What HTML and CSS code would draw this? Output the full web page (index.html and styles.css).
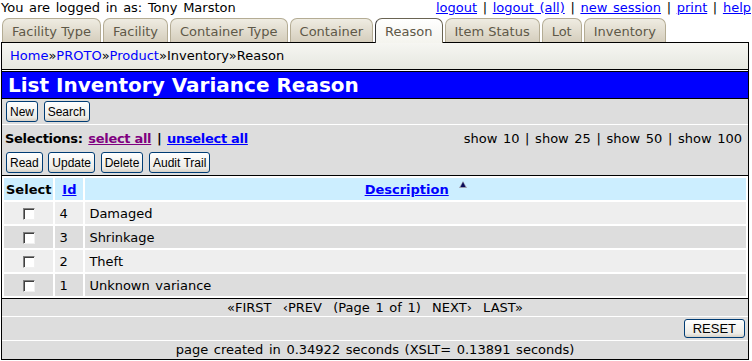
FILE: index.html
```html
<!DOCTYPE html>
<html lang="en">

<head>
    <meta charset="UTF-8">
    <title>List Inventory Variance Reason</title>
    <link rel="stylesheet" href="styles.css">
</head>

<body>
    <div class="topbar">
        <span>You are logged in as: Tony Marston</span>
        <span class="toplinks">
            <a href="#">logout</a> | <a href="#">logout (all)</a> | <a href="#">new session</a> | <a href="#">print</a> | <a href="#">help</a>
        </span>
    </div>

    <div class="tabs">
        <span class="tab">Facility Type</span>
        <span class="tab">Facility</span>
        <span class="tab">Container Type</span>
        <span class="tab">Container</span>
        <span class="tab active">Reason</span>
        <span class="tab">Item Status</span>
        <span class="tab">Lot</span>
        <span class="tab">Inventory</span>
    </div>

    <div class="page">
        <div class="navbar">
            <a href="#">Home</a>»<a href="#">PROTO</a>»<a href="#">Product</a>»Inventory»Reason
        </div>

        <div class="main">
            <h1 class="title">List Inventory Variance Reason</h1>

            <div class="actions">
                <button class="btn">New</button>
                <button class="btn">Search</button>
            </div>

            <div class="selections">
                <div class="sel-row">
                    <span><b>Selections:</b> <a href="#" class="visited">select all</a> <b>|</b> <a href="#">unselect all</a></span>
                    <span>show 10 | show 25 | show 50 | show 100</span>
                </div>
                <div class="sel-buttons">
                    <button class="btn">Read</button>
                    <button class="btn">Update</button>
                    <button class="btn">Delete</button>
                    <button class="btn">Audit Trail</button>
                </div>
            </div>

            <table class="list">
                <thead>
                    <tr>
                        <th class="col-select">Select</th>
                        <th class="col-id"><a href="#">Id</a></th>
                        <th><a href="#">Description</a>
                            <svg class="sort" width="8" height="7" viewBox="0 0 8 7"><path d="M4 0 L8 7 L0 7 Z" fill="#9a9aa8"/><path d="M4 1 L6.5 6 L1.5 6 Z" fill="#0a0a5a"/></svg>
                        </th>
                    </tr>
                </thead>
                <tbody>
                    <tr class="odd"><td class="center"><span class="check"></span></td><td>4</td><td>Damaged</td></tr>
                    <tr class="even"><td class="center"><span class="check"></span></td><td>3</td><td>Shrinkage</td></tr>
                    <tr class="odd"><td class="center"><span class="check"></span></td><td>2</td><td>Theft</td></tr>
                    <tr class="even"><td class="center"><span class="check"></span></td><td>1</td><td>Unknown variance</td></tr>
                </tbody>
            </table>

            <div class="pagination">«FIRST &nbsp;‹PREV &nbsp;(Page 1 of 1) &nbsp;NEXT› &nbsp;LAST»</div>

            <div class="reset-row">
                <button class="btn reset">RESET</button>
            </div>

            <div class="footer">page created in 0.34922 seconds (XSLT= 0.13891 seconds)</div>
        </div>
    </div>
</body>

</html>
```

FILE: styles.css
```css
body {
    margin: 0;
    font-family: "DejaVu Sans", Verdana, sans-serif;
    font-size: 13px;
    word-spacing: 1.5px;
    color: #000;
    background-color: #fff;
}

a {
    color: #0000ff;
}

a.visited {
    color: #800080;
}

.topbar {
    display: flex;
    justify-content: space-between;
    height: 17px;
    line-height: 15px;
    padding: 0 1px 0 1px;
}

/* tabs */
.tabs {
    display: flex;
    gap: 2px;
    margin-left: 2px;
    height: 25px;
    align-items: flex-end;
}

.tab {
    height: 23px;
    line-height: 25px;
    padding: 0 9px;
    color: #5e5848;
    background: linear-gradient(#efece2, #d5cebd);
    border: 1px solid #b4ac94;
    border-bottom: none;
    border-radius: 7px 7px 0 0;
    word-spacing: 0;
}

.tab.active {
    background: linear-gradient(#ffffff, #f4f4ee);
    border-color: #6a6452;
    border-left-color: #333;
    position: relative;
    margin-bottom: -1px;
    height: 24px;
}

/* breadcrumb box */
.page {
    margin: 0 3px 0 1px;
    border: 1px solid #000;
}

.navbar {
    height: 26px;
    line-height: 25px;
    padding-left: 8px;
    background: linear-gradient(#f6f6f2, #e6e8e0);
    border-bottom: 1px solid #000;
}

.navbar a {
    text-decoration: none;
}

.main {
    margin-top: 1px;
    border-top: 1px solid #000;
    background-color: #dddddd;
}

.title {
    margin: 0;
    height: 26px;
    line-height: 26px;
    padding-left: 6px;
    background-color: #0000ff;
    color: #fff;
    font-size: 20px;
    font-weight: bold;
    word-spacing: 0;
    border-bottom: 1px solid #000;
}

.btn {
    font-family: "Liberation Sans", Arial, sans-serif;
    font-size: 12px;
    word-spacing: 0;
    height: 21px;
    padding: 0 3px;
    color: #000;
    background: linear-gradient(#ffffff, #ecebe6 80%, #d6d0c5);
    border: 1px solid #003c74;
    border-radius: 3px;
    margin-right: 0;
}

.actions {
    padding: 2px 3px 2px 4px;
    height: 21px;
    border-bottom: 1px solid #fff;
}

.sel-row {
    display: flex;
    justify-content: space-between;
    height: 27px;
    line-height: 28px;
    padding: 0 6px 0 3px;
}

.sel-row b,
.sel-row a {
    font-weight: bold;
    word-spacing: 0;
    letter-spacing: -0.3px;
}

.sel-buttons {
    padding: 0 3px 1px 4px;
    height: 22px;
    border-bottom: 1px solid #000;
}

.list {
    width: 100%;
    border-spacing: 2px;
    background-color: #fff;
    border-bottom: 1px solid #000;
}

.list th {
    height: 22px;
    background-color: #cceeff;
    padding: 0 2px;
}

.list th a {
    color: #0000ff;
}

.col-select {
    width: 43px;
}

.col-id {
    width: 24px;
}

.sort {
    vertical-align: 6px;
    margin-left: 4px;
}

.list td {
    height: 22px;
    padding: 0 0 0 4px;
}

.list td.center {
    text-align: center;
    padding: 0;
}

.odd td {
    background-color: #eeeeee;
}

.even td {
    background-color: #dddddd;
}

.check {
    display: inline-block;
    width: 10px;
    height: 10px;
    vertical-align: middle;
    background-color: #fff;
    border: 1px solid;
    border-color: #808080 #f0f0f0 #f0f0f0 #808080;
    box-shadow: inset 1px 1px 0 #404040;
}

.pagination {
    text-align: center;
    height: 17px;
    line-height: 18px;
    border-bottom: 1px solid #fff;
}

.reset-row {
    text-align: right;
    height: 24px;
    padding-top: 2px;
    box-sizing: border-box;
    border-bottom: 1px solid #fff;
}

.reset-row .btn {
    margin-right: 3px;
    height: 19px;
    font-size: 13px;
    padding: 0 8px;
}

.footer {
    text-align: center;
    height: 18px;
    line-height: 17px;
}
```
